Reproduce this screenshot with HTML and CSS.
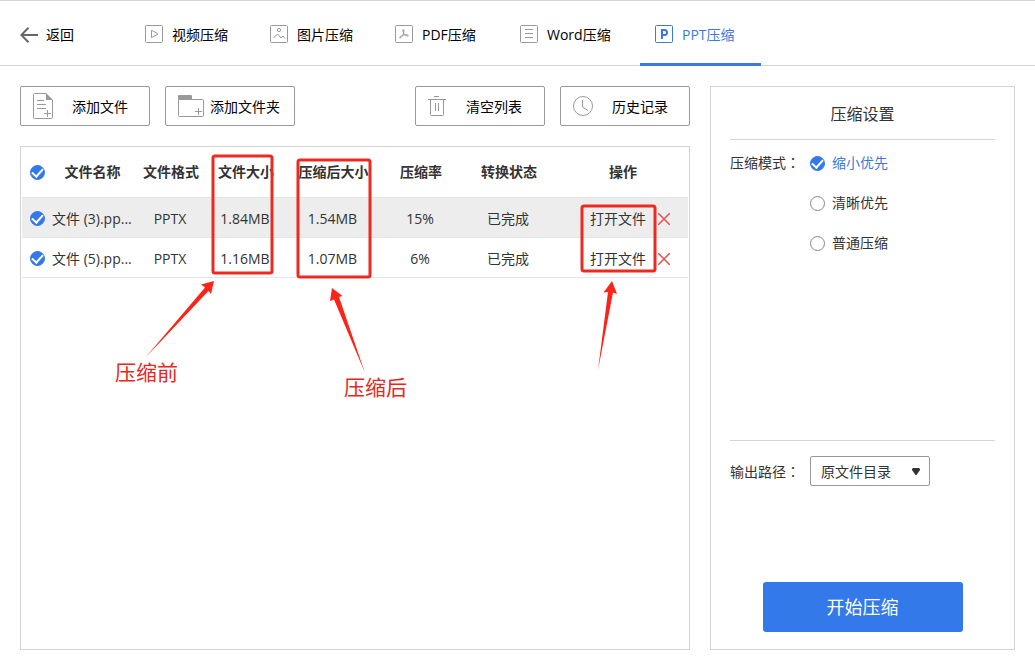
FILE: index.html
```html
<!DOCTYPE html>
<html lang="zh-CN">
<head>
<meta charset="utf-8">
<meta name="viewport" content="width=device-width, initial-scale=1">
<title>PPT压缩</title>
<link rel="stylesheet" href="styles.css">
</head>
<body>
<header class="topbar">
  <button class="back" type="button">
    <svg width="18" height="16" viewBox="0 0 18 16" fill="none" stroke="#666" stroke-width="2"><path d="M1 8H18M8.500 .8L1.300 8l7.200 7.200"/></svg>
    <span>返回</span>
  </button>
  <nav class="tabs">
    <a class="tab" href="#video">
      <svg class="tab-icon" viewBox="0 0 18 18"><rect x=".5" y=".5" width="17" height="17" rx="1"/><path d="M6.500 5.300v7.400L12.500 9.500v-1z"/></svg>
      <span>视频压缩</span>
    </a>
    <a class="tab" href="#image">
      <svg class="tab-icon" viewBox="0 0 18 18"><rect x=".5" y=".5" width="17" height="17" rx="1"/><circle cx="9" cy="5" r="1.600"/><path d="M3.500 13l4-4 3.500 4 2-2 2 2.500"/></svg>
      <span>图片压缩</span>
    </a>
    <a class="tab" href="#pdf">
      <svg class="tab-icon" viewBox="0 0 18 18"><rect x=".5" y=".5" width="17" height="17" rx="1"/><path d="M8 4.500c1.500 0 .8 2.500.5 3.500-.8 2.300-2.300 5-3.600 5-1.200-1 3-3 5-3.200 2-.2 3.600.2 3.300 1-.7.800-3.600-.8-4.500-2.600C8 6.800 7.600 5 8 4.500z"/></svg>
      <span>PDF压缩</span>
    </a>
    <a class="tab tab-wide" href="#word">
      <svg class="tab-icon" viewBox="0 0 18 18"><rect x=".5" y=".5" width="17" height="17" rx="1"/><path d="M5 4.500h8M5 8.500h8M5 12.500h8"/></svg>
      <span>Word压缩</span>
    </a>
    <a class="tab tab-active" href="#ppt" aria-current="page">
      <svg class="tab-icon" viewBox="0 0 18 18"><rect x=".5" y=".5" width="17" height="17" rx="1"/><path stroke-width="2" d="M7 14V5h2.500a2.400 2.400 0 0 1 0 5H7"/></svg>
      <span>PPT压缩</span>
    </a>
  </nav>
</header>

<div class="content">
  <main class="workspace">
    <div class="toolbar">
      <button class="tool" type="button">
        <svg class="tool-icon" width="20" height="26" viewBox="0 0 20 26"><path d="M19.500 7v17.500a1 1 0 0 1-1 1h-17a1 1 0 0 1-1-1v-23a1 1 0 0 1 1-1H13M4 7.500h7M4 11.500h9M4 15.500h9M14.500 17v7M11 20.500h7"/><path fill="#999" stroke="none" d="M13 0l7 7h-7z"/></svg>
        <span class="tool-label">添加文件</span>
      </button>
      <button class="tool tool-folder" type="button">
        <svg class="tool-icon" width="26" height="22" viewBox="0 0 26 22"><path d="M.5 4.500h24a1 1 0 0 1 1 1v15a1 1 0 0 1-1 1h-23a1 1 0 0 1-1-1zM20.500 13v7M17 16.500h7"/><path fill="#999" stroke="none" d="M0 1a1 1 0 0 1 1-1h12a1 1 0 0 1 1 1v3H0z"/></svg>
        <span class="tool-label">添加文件夹</span>
      </button>
      <button class="tool tool-right" type="button">
        <svg class="tool-icon" width="18" height="20" viewBox="0 0 18 20"><path d="M6 .5h5M0 3.500h18M2.500 3.500v15a1 1 0 0 0 1 1h11a1 1 0 0 0 1-1v-15M7.500 7v8M10.500 7v8"/></svg>
        <span class="tool-label">清空列表</span>
      </button>
      <button class="tool" type="button">
        <svg class="tool-icon" width="20" height="20" viewBox="0 0 20 20"><circle cx="10" cy="10" r="9.500"/><path d="M9.500 4v7l5.500 3.500"/></svg>
        <span class="tool-label">历史记录</span>
      </button>
    </div>

    <section class="list">
      <table class="files">
        <colgroup>
          <col class="c-check"><col class="c-name"><col class="c-format"><col class="c-size"><col class="c-after"><col class="c-ratio"><col class="c-state"><col class="c-action">
        </colgroup>
        <thead>
          <tr>
            <th class="pick"><input class="mark" type="checkbox" aria-label="全选" checked></th>
            <th>文件名称</th><th>文件格式</th><th>文件大小</th><th>压缩后大小</th><th>压缩率</th><th>转换状态</th><th>操作</th>
          </tr>
        </thead>
        <tbody>
          <tr class="selected">
            <td class="pick"><input class="mark" type="checkbox" aria-label="选择 文件 (3)" checked></td>
            <td class="name">文件 (3).pp...</td><td>PPTX</td><td>1.84MB</td><td>1.54MB</td><td>15%</td><td>已完成</td>
            <td><div class="actions"><button class="open" type="button">打开文件</button><button class="remove" type="button" aria-label="删除"><svg width="12" height="12" viewBox="0 0 12 12"><path d="M0 0l12 12M12 0L0 12"/></svg></button></div></td>
          </tr>
          <tr>
            <td class="pick"><input class="mark" type="checkbox" aria-label="选择 文件 (5)" checked></td>
            <td class="name">文件 (5).pp...</td><td>PPTX</td><td>1.16MB</td><td>1.07MB</td><td>6%</td><td>已完成</td>
            <td><div class="actions"><button class="open" type="button">打开文件</button><button class="remove" type="button" aria-label="删除"><svg width="12" height="12" viewBox="0 0 12 12"><path d="M0 0l12 12M12 0L0 12"/></svg></button></div></td>
          </tr>
        </tbody>
      </table>
      <svg class="notes" width="670" height="300" viewBox="20 146 670 300">
        <g class="note-box">
          <rect x="213" y="156" width="59" height="117" rx="2"/>
          <rect x="298" y="160" width="72" height="117" rx="2"/>
          <rect x="582" y="206" width="73" height="65" rx="2"/>
        </g>
        <g class="note-arrow">
          <path d="M214 281L201 284.500L205 287.500L145 358L208.500 291L211 294z"/>
          <path d="M332 288L330 301L334 299.500L365 373L339 297L342.500 296z"/>
          <path d="M612 281L603.500 292.500L608 292L598 370L613 292.500L617 294z"/>
        </g>
        <text class="note-text" x="115" y="380">压缩前</text>
        <text class="note-text" x="344" y="395">压缩后</text>
      </svg>
    </section>
  </main>

  <aside class="settings">
    <h2 class="settings-title">压缩设置</h2>
    <div class="mode" role="radiogroup" aria-labelledby="mode-label">
      <span class="field-label" id="mode-label">压缩模式<span class="colon" lang="zh-Hant">：</span></span>
      <div class="options">
        <label class="option"><input class="mark" type="radio" name="mode" checked><span>缩小优先</span></label>
        <label class="option"><input class="mark" type="radio" name="mode"><span>清晰优先</span></label>
        <label class="option"><input class="mark" type="radio" name="mode"><span>普通压缩</span></label>
      </div>
    </div>
    <div class="output">
      <label class="field-label" for="path">输出路径<span class="colon" lang="zh-Hant">：</span></label>
      <div class="select-wrap">
        <select class="select" id="path"><option>原文件目录</option></select>
        <svg class="caret" width="8" height="7" viewBox="0 0 8 7"><path d="M1 0h6l1 1v1L4.500 7h-1L0 2V1z"/></svg>
      </div>
    </div>
    <button class="start" type="button">开始压缩</button>
  </aside>
</div>
</body>
</html>
```

FILE: styles.css
```css
* { box-sizing: border-box; }

body {
  margin: 0;
  min-height: 100vh;
  display: flex;
  flex-direction: column;
  background: #fff;
  color: #333;
  font: 14px/20px "Open Sans", "Noto Sans CJK SC", sans-serif;
}

button, select, input { font: inherit; color: inherit; margin: 0; }
button { background: none; border: 0; padding: 0; cursor: pointer; }
svg { flex: none; display: block; }

.topbar {
  display: flex;
  height: 66px;
  padding-left: 20px;
  border-top: 1px solid #d5d5d5;
  border-bottom: 1px solid #d5d5d5;
  color: #000;
}
.back { display: flex; align-items: center; gap: 8px; margin-right: 56px; padding-top: 3px; }
.tabs { display: flex; gap: 4px; }
.tab {
  display: flex;
  align-items: center;
  gap: 9px;
  min-width: 121px;
  height: 65px;
  padding: 3px 20px 0 15px;
  border-bottom: 3px solid transparent;
  color: #000;
  text-decoration: none;
  white-space: nowrap;
}
.tab span { padding-top: 2px; }
.tab-wide { min-width: 131px; }
.tab-active { color: #3c7ad9; border-bottom-color: #3c7ad9; }
.tab-icon { width: 18px; height: 18px; fill: none; stroke: #999; }
.tab-active .tab-icon { stroke: #3c7ad9; }

.content {
  flex: 1;
  display: grid;
  grid-template-columns: minmax(0, 1fr) 305px;
  gap: 20px;
  padding: 20px;
}
.workspace { display: flex; flex-direction: column; gap: 20px; }

.toolbar { display: flex; gap: 15px; }
.tool {
  display: flex;
  align-items: center;
  width: 130px;
  height: 40px;
  padding: 0 2px 0 12px;
  border: 1px solid #999;
  border-radius: 2px;
  color: #000;
}
.tool-folder { padding-right: 8px; }
.tool-right { margin-left: auto; }
.tool-icon { fill: none; stroke: #999; }
.tool-label { flex: 1; padding-top: 2px; text-align: center; white-space: nowrap; }

.list {
  position: relative;
  flex: 1;
  padding: 0 1px;
  border: 1px solid #d5d5d5;
}
.files {
  width: 100%;
  table-layout: fixed;
  border-collapse: collapse;
  text-align: center;
}
.c-check { width: 28px; }
.c-name { width: 85px; }
.c-format { width: 72px; }
.c-size { width: 78px; }
.c-after { width: 97px; }
.c-ratio { width: 78px; }
.c-state { width: 98px; }
.c-action { width: 130px; }
.files th, .files td { padding: 0; white-space: nowrap; border-bottom: 1px solid #e5e5e5; }
.files th { height: 50px; padding-top: 1px; font-weight: 700; }
.files td { height: 40px; padding: 3px 2px 0 0; }
.files .name { text-align: left; padding-left: 2px; }
.files .pick { text-align: left; padding-left: 8px; }
.selected { background: #ededed; }

.mark {
  appearance: none;
  display: grid;
  place-items: center;
  flex: none;
  width: 15px;
  height: 15px;
  border: 1px solid #888;
  border-radius: 50%;
  background: #fff;
}
.mark:checked { border-color: #3479ea; background: #3479ea; }
.mark:checked::after {
  content: "";
  width: 5px;
  height: 9px;
  margin-bottom: 2px;
  border: solid #fff;
  border-width: 0 2px 2px 0;
  transform: rotate(42deg);
}

.actions { display: flex; align-items: center; justify-content: center; gap: 12px; padding-left: 16px; }
.remove svg { fill: none; stroke: #df5252; stroke-width: 1.5; }

.notes { position: absolute; top: -1px; left: -1px; pointer-events: none; }
.note-box { fill: none; stroke: #ed2a20; stroke-width: 3; }
.note-arrow { fill: #fb2418; }
.note-text { font-size: 21px; fill: #e5281e; }

.settings {
  display: flex;
  flex-direction: column;
  padding: 0 19px 17px;
  border: 1px solid #d5d5d5;
}
.settings-title {
  margin: 0;
  height: 53px;
  border-bottom: 1px solid #d5d5d5;
  font-size: 16px;
  font-weight: 400;
  line-height: 54px;
  text-align: center;
}
.mode {
  flex: 1;
  display: flex;
  gap: 10px;
  padding-top: 3px;
  border-bottom: 1px solid #d5d5d5;
}
.field-label { line-height: 38px; white-space: nowrap; }
.colon { font-family: "Noto Sans CJK TC", sans-serif; }
.option { display: flex; align-items: center; gap: 7px; height: 40px; }
.option:has(:checked) { color: #3c7ad9; }
.output { display: flex; align-items: center; gap: 10px; height: 30px; margin: 15px 0 96px; }
.select-wrap { position: relative; width: 120px; }
.select {
  appearance: none;
  display: block;
  width: 100%;
  height: 30px;
  padding: 1px 10px 0;
  border: 1px solid #999;
  border-radius: 2px;
  background: #fff;
}
.caret { position: absolute; top: 12px; right: 10px; fill: #333; pointer-events: none; }
.start {
  align-self: center;
  width: 200px;
  height: 50px;
  border-radius: 3px;
  background: #3479ea;
  color: #fff;
  font-size: 18px;
}
```
